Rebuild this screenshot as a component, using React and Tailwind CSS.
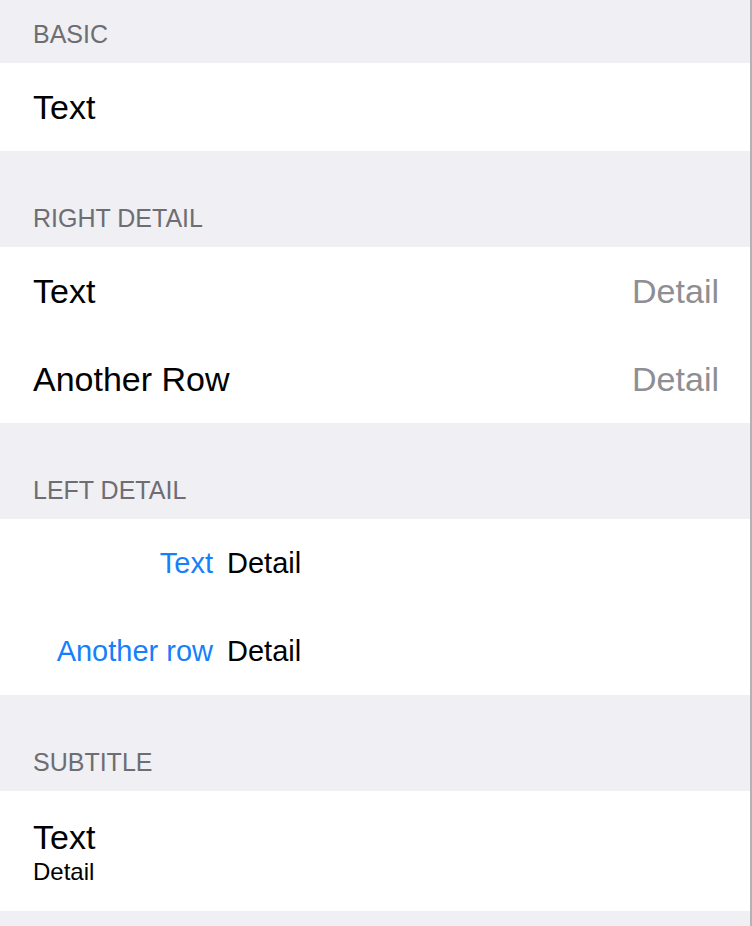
import React from "react";

const font = { fontFamily: '"Liberation Sans", Arial, sans-serif' };

function Header({ children, first }) {
  return (
    <div
      className={`flex items-end pl-[33px] pb-[14px] ${first ? "h-[63px]" : "h-[96px]"}`}
    >
      <span className="text-[25px] leading-[30px] text-[#6d6d72]">{children}</span>
    </div>
  );
}

function Row({ children }) {
  return <div className="flex h-[88px] items-center bg-white pl-[33px] pr-[31px]">{children}</div>;
}

export default function App() {
  return (
    <div className="min-h-screen w-[752px] bg-[#efeff4]" style={font}>
      <div className="min-h-screen w-[750px] border-r-2 border-[#b3b3b6] box-content">
        <Header first>BASIC</Header>
        <Row>
          <span className="text-[34px] leading-[40px] text-black">Text</span>
        </Row>

        <Header>RIGHT DETAIL</Header>
        <Row>
          <span className="flex-1 text-[34px] leading-[40px] text-black">Text</span>
          <span className="text-[34px] leading-[40px] text-[#8e8e93]">Detail</span>
        </Row>
        <Row>
          <span className="flex-1 text-[34px] leading-[40px] text-black">Another Row</span>
          <span className="text-[34px] leading-[40px] text-[#8e8e93]">Detail</span>
        </Row>

        <Header>LEFT DETAIL</Header>
        <Row>
          <span className="w-[180px] text-right text-[29px] leading-[34px] text-[#167ffb]">Text</span>
          <span className="ml-[14px] text-[29px] leading-[34px] text-black">Detail</span>
        </Row>
        <Row>
          <span className="w-[180px] text-right text-[29px] leading-[34px] text-[#167ffb]">Another row</span>
          <span className="ml-[14px] text-[29px] leading-[34px] text-black">Detail</span>
        </Row>

        <Header>SUBTITLE</Header>
        <div className="flex h-[120px] flex-col bg-white pl-[33px] pt-[26px]">
          <span className="text-[34px] leading-[40px] text-black">Text</span>
          <span className="mt-[1px] text-[24px] leading-[28px] text-black">Detail</span>
        </div>
      </div>
    </div>
  );
}
